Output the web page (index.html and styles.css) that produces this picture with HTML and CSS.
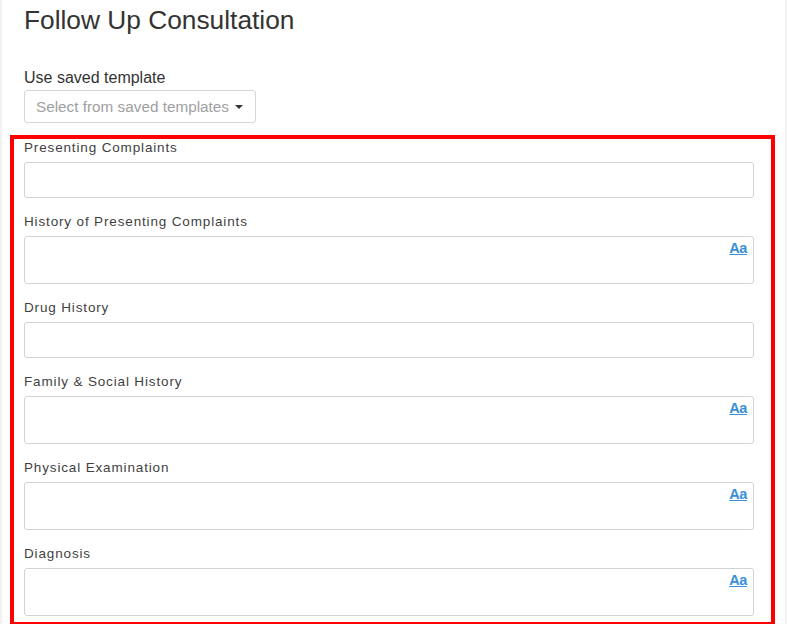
FILE: index.html
```html
<!DOCTYPE html>
<html>
<head>
<meta charset="utf-8">
<title>Follow Up Consultation</title>
<link rel="stylesheet" href="styles.css">
</head>
<body>
<div class="page">
  <h1 class="title">Follow Up Consultation</h1>
  <div class="template">
    <div class="template-label">Use saved template</div>
    <button class="select-btn" type="button">Select from saved templates <span class="caret"></span></button>
  </div>
  <div class="highlight">
    <div class="group">
      <label class="field-label">Presenting Complaints</label>
      <input class="field input" type="text">
    </div>
    <div class="group">
      <label class="field-label">History of Presenting Complaints</label>
      <div class="area-wrap">
        <div class="field area"></div>
        <span class="aa">Aa</span>
      </div>
    </div>
    <div class="group">
      <label class="field-label">Drug History</label>
      <input class="field input" type="text">
    </div>
    <div class="group">
      <label class="field-label">Family &amp; Social History</label>
      <div class="area-wrap">
        <div class="field area"></div>
        <span class="aa">Aa</span>
      </div>
    </div>
    <div class="group">
      <label class="field-label">Physical Examination</label>
      <div class="area-wrap">
        <div class="field area"></div>
        <span class="aa">Aa</span>
      </div>
    </div>
    <div class="group last">
      <label class="field-label">Diagnosis</label>
      <div class="area-wrap">
        <div class="field area"></div>
        <span class="aa">Aa</span>
      </div>
    </div>
  </div>
</div>
</body>
</html>
```
FILE: styles.css
```css
html, body {
  margin: 0;
  padding: 0;
  background: #ffffff;
}
body {
  font-family: "Liberation Sans", Arial, sans-serif;
  color: #333333;
}
.page {
  width: 787px;
  box-sizing: border-box;
  border-left: 2px solid #f2f2f2;
  border-right: 2px solid #f2f2f2;
  min-height: 640px;
}
.title {
  margin: 0 0 0 22px;
  font-size: 26.3px;
  font-weight: normal;
  line-height: 40px;
  color: #333333;
}
.template {
  margin: 28px 0 0 22px;
}
.template-label {
  font-size: 16px;
  line-height: 20px;
  color: #333333;
}
.select-btn {
  display: flex;
  align-items: center;
  gap: 6px;
  margin-top: 2px;
  height: 33px;
  box-sizing: border-box;
  padding: 0 12px 0 11px;
  border: 1px solid #d6d6d6;
  border-radius: 3px;
  background: #ffffff;
  font-family: "Liberation Sans", Arial, sans-serif;
  font-size: 15.3px;
  color: #a0a0a0;
}
.caret {
  width: 0;
  height: 0;
  border-left: 4px solid transparent;
  border-right: 4px solid transparent;
  border-top: 4px solid #333333;
  margin-top: 1px;
}
.highlight {
  margin: 12px 0 0 8px;
  width: 765px;
  box-sizing: border-box;
  border: 4px solid #ff0000;
  padding: 0 17px 0 10px;
}
.group {
  margin-bottom: 15px;
}
.group.last {
  margin-bottom: 6px;
}
.field-label {
  display: block;
  font-size: 13.5px;
  line-height: 17px;
  letter-spacing: 0.85px;
  color: #3f3f3f;
  margin-bottom: 6px;
}
.field {
  display: block;
  width: 100%;
  box-sizing: border-box;
  border: 1px solid #d3d3d3;
  border-radius: 3px;
  background: #ffffff;
  margin: 0;
}
.input {
  height: 36px;
  padding: 0 10px;
  font-family: "Liberation Sans", Arial, sans-serif;
  font-size: 14px;
}
.area-wrap {
  position: relative;
}
.area {
  height: 48px;
}
.aa {
  position: absolute;
  top: 4px;
  right: 7px;
  font-size: 14.5px;
  font-weight: bold;
  line-height: 17px;
  color: #3a8fd8;
  text-decoration: underline;
  letter-spacing: -0.4px;
}
```
